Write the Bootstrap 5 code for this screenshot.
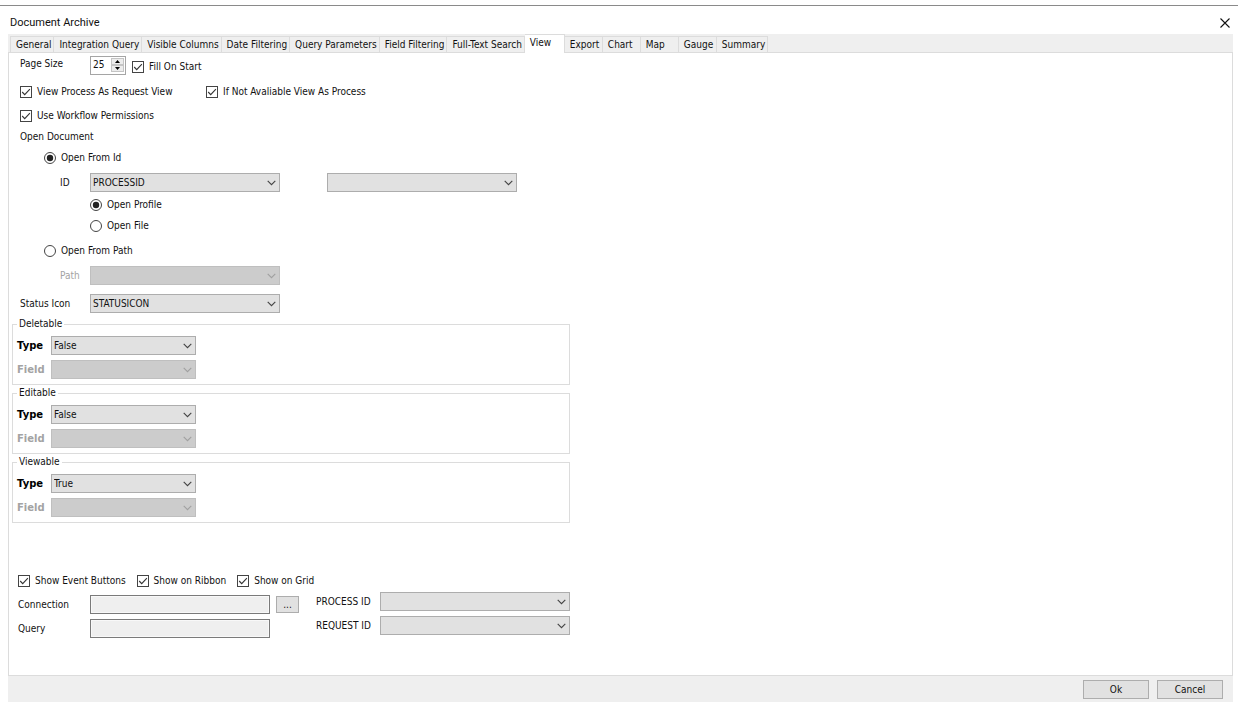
<!DOCTYPE html>
<html lang="en">
<head>
<meta charset="utf-8">
<meta name="viewport" content="width=device-width, initial-scale=1">
<title>Document Archive</title>
<link href="https://cdn.jsdelivr.net/npm/bootstrap@5.3.0/dist/css/bootstrap.min.css" rel="stylesheet">
<style>
  body { font: 10px/16px "DejaVu Sans Condensed", "DejaVu Sans", sans-serif; color: #111; background: #fff; padding: 5px 0 6px; }
  .dialog { border-top: 1px solid #8a8a8a; }
  .titlebar { height: 28px; padding: 6px 8px 0 10px; }
  .titlebar h1 { font: 11px/16px Roboto, sans-serif; margin: 0; }
  .close-btn { width: 10px; height: 16px; padding: 0; border: 0; background: none; line-height: 0; }
  .frame { margin: 0 5px 0 8px; background: #efefef; }

  .tabstrip { padding: 0 2px; height: 18px; border: 0; flex-wrap: nowrap; }
  .tabstrip .nav-link { min-width: 38px; height: 16px; padding: 0 2px 0 5px; color: #111; line-height: 16px; text-align: left; border: 1px solid #dcdcdc; border-width: 1px 1px 0 0; border-radius: 0; margin: 0; white-space: nowrap; }
  .tabstrip .nav-link.active { height: 19px; min-width: 40px; background: #fff; border-color: #dcdcdc; color: #111; position: relative; }
  .tabstrip .first-tab { border-left-width: 1px; }

  .sheet { background: #fff; border: 1px solid #dcdcdc; padding: 3px 0 20px; }
  .inset { padding-left: 11px; }
  .field-label { width: 70px; flex: none; }
  .sub-label { width: 30px; flex: none; }
  .group-label { width: 34px; flex: none; font-family: "DejaVu Sans", sans-serif; font-weight: bold; color: #000; }
  .dim { color: #a3a3a3; }
  .lvl-1 { padding-left: 24px; }
  .lvl-2 { padding-left: 40px; }
  .lvl-3 { padding-left: 70px; }
  .gap-s { margin-top: 5px; }
  .gap-m { margin-top: 7px; }
  .gap-l { margin-top: 9px; }
  .gap-xl { margin-top: 50px; }

  .check { display: flex; align-items: center; gap: 5px; height: 16px; }
  .check input { appearance: none; width: 12px; height: 12px; margin: 0; flex: none; border: 1px solid #444; background: #fff center/10px 10px no-repeat; }
  .check input[type=checkbox]:checked { background-image: url("data:image/svg+xml,%3Csvg xmlns='http://www.w3.org/2000/svg' viewBox='0 0 10 10'%3E%3Cpath d='M1.2 5l2.500 2.600L8.900 2.200' fill='none' stroke='%23333' stroke-width='1.1'/%3E%3C/svg%3E"); }
  .check input[type=radio] { border-radius: 50%; }
  .check input[type=radio]:checked { background-image: url("data:image/svg+xml,%3Csvg xmlns='http://www.w3.org/2000/svg' viewBox='0 0 10 10'%3E%3Ccircle cx='5' cy='5' r='3.2' fill='%23222'/%3E%3C/svg%3E"); }
  .check-col { width: 186px; }
  .check-near { margin-left: 6px; }

  .combo { appearance: none; width: 190px; height: 19px; padding: 0 18px 0 2px; border: 1px solid #adadad; border-radius: 0; color: #111; font: inherit; line-height: 17px; opacity: 1;
    background: #e1e1e1 url("data:image/svg+xml,%3Csvg xmlns='http://www.w3.org/2000/svg' viewBox='0 0 9 6'%3E%3Cpath d='M.7 .8L4.5 4.6 8.3 .8' fill='none' stroke='%23444' stroke-width='1.1'/%3E%3C/svg%3E") right 3px center/9px 6px no-repeat; }
  .combo:disabled { border-color: #bfbfbf; background-color: #ccc; 
    background-image: url("data:image/svg+xml,%3Csvg xmlns='http://www.w3.org/2000/svg' viewBox='0 0 9 6'%3E%3Cpath d='M.7 .8L4.5 4.6 8.3 .8' fill='none' stroke='%23a0a0a0' stroke-width='1.1'/%3E%3C/svg%3E"); }
  .combo-sm { width: 145px; }
  .combo-next { margin-left: 47px; }
  .textbox { width: 180px; height: 19px; padding: 0 3px; border: 1px solid #7a7a7a; border-radius: 0; background: #efefef; box-shadow: inset 0 0 0 1px #f8f8f8; font: inherit; }
  .push { height: 19px; min-width: 66px; padding: 0; border: 1px solid #adadad; border-radius: 0; background: #e1e1e1; color: #111; font: inherit; line-height: 17px; }
  .push-more { min-width: 23px; height: 17px; line-height: 14px; margin-left: 6px; }

  .spinner { width: 36px; height: 19px; border: 1px solid #a5a5a5; padding: 1px; background: #fff; }
  .spinner input { appearance: textfield; width: 19px; padding: 0 0 2px 1px; border: 0; font: inherit; color: #111; background: none; }
  .spinner input::-webkit-inner-spin-button { display: none; }
  .spin-btn { width: 13px; height: 7px; padding: 0; border: 1px solid #c4c4c4; background: #ececec; display: flex; align-items: center; justify-content: center; }

  .groups { max-width: 558px; margin: 4px 0 0 3px; }
  .groupbox { border: 1px solid #dcdcdc; padding: 5px 4px; }
  .groupbox legend { float: none; width: auto; margin: 0; padding: 0 2px; font-size: 10px; line-height: 14px; }
  .groupbox .group-row + .group-row { margin-top: 5px; }
  .groupbox + .groupbox { margin-top: 1px; }

  .events { padding-left: 9px; }
  .checks { gap: 11px; }
  .events .event-label { width: 72px; flex: none; }
  .event-pairs { max-width: 552px; padding-top: 3px; }
  .event-source { padding-top: 3px; }
  .id-label { width: 64px; flex: none; }
  .footer-bar { padding: 4px 10px 3px; }
</style>
</head>
<body class="d-flex flex-column min-vh-100">
<main class="dialog d-flex flex-column flex-grow-1">
  <header class="titlebar d-flex justify-content-between align-items-center">
    <h1>Document Archive</h1>
    <button type="button" class="close-btn" aria-label="Close"><svg width="10" height="10" viewBox="0 0 10 10"><path d="M.5 .5l9 9M9.500 .5l-9 9" stroke="#111" stroke-width="1.1"/></svg></button>
  </header>
  <div class="frame d-flex flex-column flex-grow-1">
    <nav class="nav nav-tabs tabstrip align-items-end" aria-label="Settings">
      <a class="nav-link first-tab" href="#">General</a>
      <a class="nav-link" href="#">Integration Query</a>
      <a class="nav-link" href="#">Visible Columns</a>
      <a class="nav-link" href="#">Date Filtering</a>
      <a class="nav-link" href="#">Query Parameters</a>
      <a class="nav-link" href="#">Field Filtering</a>
      <a class="nav-link" href="#">Full-Text Search</a>
      <a class="nav-link active align-self-start" href="#" aria-current="page">View</a>
      <a class="nav-link" href="#">Export</a>
      <a class="nav-link" href="#">Chart</a>
      <a class="nav-link" href="#">Map</a>
      <a class="nav-link" href="#">Gauge</a>
      <a class="nav-link" href="#">Summary</a>
    </nav>
    <form class="sheet flex-grow-1">
      <div class="inset">
        <div class="d-flex">
          <label class="field-label" for="pageSize">Page Size</label>
          <div class="spinner d-flex">
            <input id="pageSize" type="number" value="25">
            <div class="d-flex flex-column">
              <button type="button" class="spin-btn" aria-label="Increase"><svg width="5" height="3" viewBox="0 0 5 3"><path d="M0 3L2.500 0 5 3z"/></svg></button>
              <button type="button" class="spin-btn" aria-label="Decrease"><svg width="5" height="3" viewBox="0 0 5 3"><path d="M0 0h5L2.500 3z"/></svg></button>
            </div>
          </div>
          <label class="check align-self-end check-near"><input type="checkbox" checked>Fill On Start</label>
        </div>
        <div class="d-flex gap-l">
          <div class="check-col"><label class="check"><input type="checkbox" checked>View Process As Request View</label></div>
          <label class="check"><input type="checkbox" checked>If Not Avaliable View As Process</label>
        </div>
        <div class="d-flex mt-2"><label class="check"><input type="checkbox" checked>Use Workflow Permissions</label></div>
        <div class="gap-s">Open Document</div>
        <div class="d-flex gap-s lvl-1"><label class="check"><input type="radio" name="source" checked>Open From Id</label></div>
        <div class="d-flex gap-m lvl-2 align-items-center">
          <label class="sub-label" for="idField">ID</label>
          <select id="idField" class="combo"><option>PROCESSID</option></select>
          <select class="combo combo-next" aria-label="ID format"><option></option></select>
        </div>
        <div class="d-flex gap-s lvl-3"><label class="check"><input type="radio" name="target" checked>Open Profile</label></div>
        <div class="d-flex gap-s lvl-3"><label class="check"><input type="radio" name="target">Open File</label></div>
        <div class="d-flex gap-l lvl-1"><label class="check"><input type="radio" name="source">Open From Path</label></div>
        <div class="d-flex gap-m lvl-2 align-items-center">
          <label class="sub-label dim" for="pathField">Path</label>
          <select id="pathField" class="combo" disabled><option></option></select>
        </div>
        <div class="d-flex gap-l align-items-center">
          <label class="field-label" for="statusIcon">Status Icon</label>
          <select id="statusIcon" class="combo"><option>STATUSICON</option></select>
        </div>
      </div>

      <div class="groups">
        <fieldset class="groupbox">
          <legend>Deletable</legend>
          <div class="group-row d-flex align-items-center"><label class="group-label" for="delType">Type</label><select id="delType" class="combo combo-sm"><option>False</option><option>True</option></select></div>
          <div class="group-row d-flex align-items-center"><label class="group-label dim" for="delField">Field</label><select id="delField" class="combo combo-sm" disabled><option></option></select></div>
        </fieldset>
        <fieldset class="groupbox">
          <legend>Editable</legend>
          <div class="group-row d-flex align-items-center"><label class="group-label" for="editType">Type</label><select id="editType" class="combo combo-sm"><option>False</option><option>True</option></select></div>
          <div class="group-row d-flex align-items-center"><label class="group-label dim" for="editField">Field</label><select id="editField" class="combo combo-sm" disabled><option></option></select></div>
        </fieldset>
        <fieldset class="groupbox">
          <legend>Viewable</legend>
          <div class="group-row d-flex align-items-center"><label class="group-label" for="viewType">Type</label><select id="viewType" class="combo combo-sm"><option>True</option><option>False</option></select></div>
          <div class="group-row d-flex align-items-center"><label class="group-label dim" for="viewField">Field</label><select id="viewField" class="combo combo-sm" disabled><option></option></select></div>
        </fieldset>
      </div>

      <div class="events gap-xl">
        <div class="d-flex checks">
          <label class="check"><input type="checkbox" checked>Show Event Buttons</label>
          <label class="check"><input type="checkbox" checked>Show on Ribbon</label>
          <label class="check"><input type="checkbox" checked>Show on Grid</label>
        </div>
        <div class="event-pairs d-flex justify-content-between">
          <div class="event-source">
            <div class="d-flex align-items-center">
              <label class="event-label" for="connection">Connection</label>
              <input id="connection" type="text" class="textbox" readonly>
              <button type="button" class="push push-more" aria-label="Choose connection">...</button>
            </div>
            <div class="d-flex align-items-center gap-s">
              <label class="event-label" for="query">Query</label>
              <input id="query" type="text" class="textbox" readonly>
            </div>
          </div>
          <div>
            <div class="d-flex align-items-center"><label class="id-label" for="processId">PROCESS ID</label><select id="processId" class="combo"><option></option></select></div>
            <div class="d-flex align-items-center gap-s"><label class="id-label" for="requestId">REQUEST ID</label><select id="requestId" class="combo"><option></option></select></div>
          </div>
        </div>
      </div>
    </form>
    <footer class="footer-bar d-flex justify-content-end gap-2">
      <button type="button" class="push">Ok</button>
      <button type="button" class="push">Cancel</button>
    </footer>
  </div>
</main>
<script src="https://cdn.jsdelivr.net/npm/bootstrap@5.3.0/dist/js/bootstrap.bundle.min.js"></script>
</body>
</html>
